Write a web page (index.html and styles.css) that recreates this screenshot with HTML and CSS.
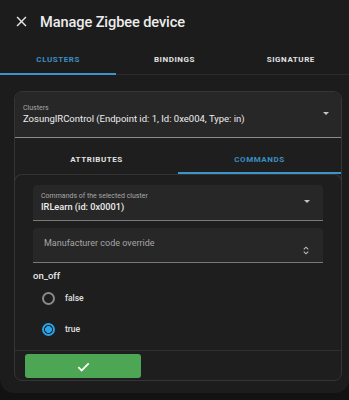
FILE: index.html
```html
<!DOCTYPE html>
<html>
<head>
<meta charset="utf-8">
<link rel="stylesheet" href="styles.css">
</head>
<body>
<div class="dialog">
  <div class="header">
    <svg class="close" viewBox="0 0 24 24" width="17" height="17"><path fill="#e6e6e6" d="M19 6.41L17.59 5 12 10.59 6.41 5 5 6.41 10.59 12 5 17.59 6.41 19 12 13.41 17.59 19 19 17.59 13.41 12z"/></svg>
    <div class="title">Manage Zigbee device</div>
  </div>
  <div class="tabs">
    <div class="tab active">CLUSTERS</div>
    <div class="tab">BINDINGS</div>
    <div class="tab">SIGNATURE</div>
  </div>
  <div class="content">
    <div class="card">
      <div class="select big">
        <div class="sel-text">
          <div class="label">Clusters</div>
          <div class="value">ZosungIRControl (Endpoint id: 1, Id: 0xe004, Type: in)</div>
        </div>
        <span class="arrow"></span>
      </div>
      <div class="subtabs">
        <div class="subtab">ATTRIBUTES</div>
        <div class="subtab active">COMMANDS</div>
      </div>
      <div class="panel">
        <div class="select cmd">
          <div class="sel-text">
            <div class="label">Commands of the selected cluster</div>
            <div class="value strong">IRLearn (id: 0x0001)</div>
          </div>
          <span class="arrow"></span>
        </div>
        <div class="select manu">
          <div class="placeholder">Manufacturer code override</div>
          <svg class="spin" viewBox="0 0 8 12" width="6" height="9"><path d="M1 4.5 L4 1.5 L7 4.5 M1 7.5 L4 10.5 L7 7.5" fill="none" stroke="#bdbdbd" stroke-width="1.4"/></svg>
        </div>
        <div class="argname">on_off</div>
        <div class="radio-row"><span class="radio"></span><span class="rlabel">false</span></div>
        <div class="radio-row"><span class="radio checked"></span><span class="rlabel">true</span></div>
        <div class="actions">
          <div class="button">
            <svg viewBox="0 0 24 24" width="15" height="15"><path fill="#ffffff" d="M9 16.2L4.8 12l-2.1 2.1L9 20.4 21.3 8.1l-2.1-2.1z"/></svg>
          </div>
        </div>
      </div>
    </div>
  </div>
</div>
</body>
</html>
```
FILE: styles.css
```css
* { box-sizing: border-box; }
html, body { margin: 0; padding: 0; }
body {
  background: #121212;
  font-family: Roboto, "Noto Sans", sans-serif;
  color: #e4e4e4;
  width: 349px;
  height: 400px;
  overflow: hidden;
}
.dialog {
  height: 393px;
  background: #1c1c1c;
  border-radius: 0 0 14px 14px;
  overflow: hidden;
}
.header {
  height: 43px;
  display: flex;
  align-items: center;
  padding-left: 13px;
}
.close { display: block; }
.title {
  margin-left: 10px;
  font-size: 14.6px;
  font-weight: 500;
  color: #ececec;
  letter-spacing: -0.1px;
}
.tabs {
  display: grid;
  grid-template-columns: 1fr 1fr 1fr;
  height: 32px;
  border-bottom: 1px solid #2b2b2b;
}
.tab, .subtab {
  position: relative;
  display: flex;
  align-items: center;
  justify-content: center;
  font-size: 8px;
  font-weight: 700;
  letter-spacing: 0.07em;
  color: #e2e2e2;
}
.tab { padding-top: 2px; }
.subtab { padding-top: 6px; }
.tab.active, .subtab.active { color: #3a90c4; }
.tab.active::after, .subtab.active::after {
  content: "";
  position: absolute;
  left: 0;
  right: 0;
  bottom: 0;
  height: 2px;
  background: #3a95cc;
}
.tab.active::after { bottom: -1px; }
.content {
  padding: 16px 7px 0 14px;
}
.card {
  border: 1px solid #353535;
  border-radius: 8px;
  background: #1e1e1e;
  overflow: hidden;
}
.select {
  display: flex;
  align-items: center;
  background: #272727;
  border-bottom: 1px solid #8c8c8c;
  border-radius: 4px 4px 0 0;
}
.select.big {
  height: 46px;
  padding: 0 12px 0 8px;
}
.sel-text { flex: 1; min-width: 0; }
.label {
  font-size: 7px;
  color: #a8a8a8;
  line-height: 9px;
}
.value {
  font-size: 9.5px;
  color: #ededed;
  line-height: 12px;
  white-space: nowrap;
}
.value.strong { font-weight: 500; font-size: 9.2px; }
.arrow {
  width: 0;
  height: 0;
  border-left: 3px solid transparent;
  border-right: 3px solid transparent;
  border-top: 3px solid #c4c4c4;
  margin-top: -2px;
}
.subtabs {
  display: grid;
  grid-template-columns: 1fr 1fr;
  height: 36px;
}
.panel {
  border: 1px solid #333333;
  border-bottom: none;
  border-radius: 8px 8px 0 0;
  margin: 0 -1px;
  padding-top: 10px;
}
.select.cmd {
  height: 36px;
  margin: 0 18px 0 18px;
  padding: 0 13px 0 8px;
  border-bottom-color: #7a7a7a;
}
.select.manu {
  height: 35px;
  margin: 7px 18px 0 18px;
  padding: 0 14px 0 11px;
  border-bottom-color: #7a7a7a;
}
.placeholder {
  flex: 1;
  font-size: 9px;
  color: #a6a6a6;
  margin-top: -4px;
}
.spin { margin-top: 10px; display: block; }
.argname {
  margin: 6px 0 0 18px;
  font-size: 9.5px;
  font-weight: 500;
  line-height: 14px;
  color: #e8e8e8;
}
.radio-row {
  height: 31px;
  display: flex;
  align-items: center;
  padding-left: 27px;
}
.radio {
  width: 13px;
  height: 13px;
  border-radius: 50%;
  border: 2px solid #8a8a8a;
}
.radio.checked {
  border-color: #2aa2e8;
  background: radial-gradient(circle, #2aa2e8 0 3.2px, transparent 3.7px);
}
.rlabel {
  margin-left: 10px;
  font-size: 8.5px;
  font-weight: 500;
  color: #e0e0e0;
  margin-top: -1px;
}
.actions {
  margin-top: 5px;
  border-top: 1px solid #303030;
  padding: 3px 0 2px 10px;
}
.button {
  width: 116px;
  height: 24px;
  background: #4da653;
  border-radius: 3px;
  display: flex;
  align-items: center;
  justify-content: center;
}
.button svg { display: block; }
```
